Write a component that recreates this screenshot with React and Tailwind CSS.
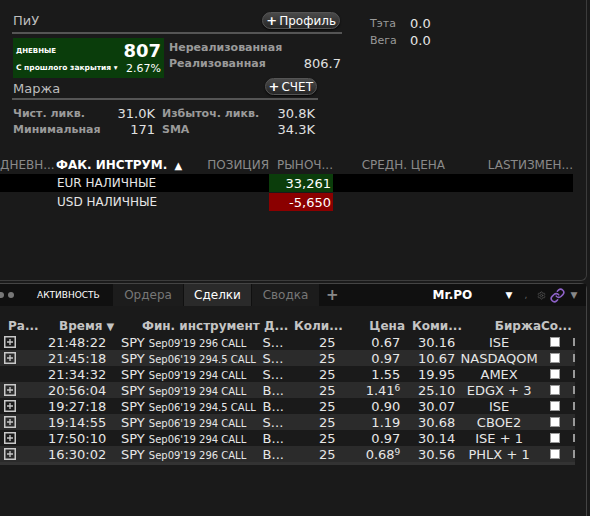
import { Link, Settings } from "lucide-react";

const trades = [
  { plus: true, time: "21:48:22", exp: "Sep09'19 296 CALL", side: "S...", qty: "25", price: "0.67", sup: "", comm: "30.16", exch: "ISE" },
  { plus: true, time: "21:45:18", exp: "Sep06'19 294.5 CALL", side: "S...", qty: "25", price: "0.97", sup: "", comm: "10.67", exch: "NASDAQOM" },
  { plus: false, time: "21:34:32", exp: "Sep09'19 294 CALL", side: "S...", qty: "25", price: "1.55", sup: "", comm: "19.95", exch: "AMEX" },
  { plus: true, time: "20:56:04", exp: "Sep09'19 294 CALL", side: "B...", qty: "25", price: "1.41", sup: "6", comm: "25.10", exch: "EDGX + 3" },
  { plus: true, time: "19:27:18", exp: "Sep06'19 294.5 CALL", side: "B...", qty: "25", price: "0.90", sup: "", comm: "30.07", exch: "ISE" },
  { plus: true, time: "19:14:55", exp: "Sep06'19 294 CALL", side: "S...", qty: "25", price: "1.19", sup: "", comm: "30.68", exch: "CBOE2" },
  { plus: true, time: "17:50:10", exp: "Sep06'19 294 CALL", side: "B...", qty: "25", price: "0.97", sup: "", comm: "30.14", exch: "ISE + 1" },
  { plus: true, time: "16:30:02", exp: "Sep09'19 296 CALL", side: "B...", qty: "25", price: "0.68", sup: "9", comm: "30.56", exch: "PHLX + 1" },
];

const PillButton = ({ children }) => (
  <button className="flex items-center h-[17px] px-[3px] rounded-full bg-gradient-to-b from-[#4a4a4a] to-[#262626] border border-[#555] text-white text-[12px] leading-none shadow-[0_1px_2px_rgba(0,0,0,0.8)]">
    <span className="font-bold mr-[2px] text-[13px]">+</span>
    {children}
  </button>
);

const PlusBox = () => (
  <svg width="12" height="12" viewBox="0 0 12 12">
    <rect x="0.75" y="0.75" width="10.5" height="10.5" fill="none" stroke="#c8c8c8" strokeWidth="1.5" />
    <path d="M6 3v6M3 6h6" stroke="#c8c8c8" strokeWidth="1.3" />
  </svg>
);

export default function App() {
  return (
    <div className="w-[590px] h-[516px] overflow-hidden bg-[#1a1a1a] flex flex-col" style={{ fontFamily: '"DejaVu Sans", sans-serif' }}>
      {/* Top panel */}
      <div className="w-[587px] h-[281px] shrink-0 border-r border-b border-[#3c3c3c] rounded-br-[6px]">
        <div className="flex">
          {/* Left block */}
          <div className="ml-[12px] w-[330px]">
            <div className="flex items-end justify-between h-[34px] border-b-2 border-[#555] pb-[2px]">
              <span className="text-[13px] text-[#bdbdbd] ml-[1px] leading-none mb-[3px]">ПиУ</span>
              <div className="mb-[1px] mr-[2px]"><PillButton>Профиль</PillButton></div>
            </div>
            <div className="flex mt-[4px]">
              <div className="w-[151px] h-[40px] bg-[#0a3d0b] ml-[1px] flex flex-col justify-center px-[3px]">
                <div className="flex items-center justify-between h-[20px]">
                  <span className="text-[7px] font-bold text-white">ДНЕВНЫЕ</span>
                  <span className="text-[18px] font-bold text-white leading-none">807</span>
                </div>
                <div className="flex items-center justify-between h-[14px]">
                  <span className="text-[7.5px] font-bold text-white">С прошлого закрытия ▾</span>
                  <span className="text-[11px] text-white leading-none">2.67%</span>
                </div>
              </div>
              <div className="flex-1 pl-[5px] text-[11px] font-bold text-[#9a9a9a] leading-none">
                <div className="h-[16px] flex items-center mt-[1px]">Нереализованная</div>
                <div className="h-[16px] flex items-center justify-between">
                  <span>Реализованная</span>
                  <span className="font-normal text-[13px] text-[#e0e0e0] mr-[1px]">806.7</span>
                </div>
              </div>
            </div>
            <div className="w-[306px] flex items-end justify-between h-[22px] border-b-2 border-[#555] pb-[2px]">
              <span className="text-[13px] text-[#bdbdbd] ml-[1px] leading-none mb-[1px]">Маржа</span>
              <div className="mb-[1px] mr-[1px]"><PillButton>СЧЕТ</PillButton></div>
            </div>
            <div className="mt-[5px] text-[11px] font-bold text-[#9a9a9a] leading-none">
              <div className="flex items-center h-[16px]">
                <span className="w-[100px] ml-[1px]">Чист. ликв.</span>
                <span className="w-[42px] text-right font-normal text-[13px] text-[#e0e0e0]">31.0K</span>
                <span className="w-[115px] ml-[7px]">Избыточ. ликв.</span>
                <span className="w-[38px] text-right font-normal text-[13px] text-[#e0e0e0]">30.8K</span>
              </div>
              <div className="flex items-center h-[16px]">
                <span className="w-[100px] ml-[1px]">Минимальная</span>
                <span className="w-[42px] text-right font-normal text-[13px] text-[#e0e0e0]">171</span>
                <span className="w-[115px] ml-[7px]">SMA</span>
                <span className="w-[38px] text-right font-normal text-[13px] text-[#e0e0e0]">34.3K</span>
              </div>
            </div>
          </div>
          {/* Greeks */}
          <div className="ml-[28px] mt-[15px] text-[11px] leading-none">
            <div className="flex items-center h-[17px]">
              <span className="w-[40px] text-[#999]">Тэта</span>
              <span className="text-[13px] text-[#e6e6e6]">0.0</span>
            </div>
            <div className="flex items-center h-[17px]">
              <span className="w-[40px] text-[#999]">Вега</span>
              <span className="text-[13px] text-[#e6e6e6]">0.0</span>
            </div>
          </div>
        </div>

        {/* Positions table */}
        <div className="mt-[19px] w-[573px]">
          <div className="flex items-center h-[18px] text-[12px] leading-none text-[#8a8a8a] whitespace-nowrap overflow-hidden">
            <span className="w-[56px] overflow-hidden">ДНЕВН...</span>
            <span className="w-[150px] font-bold text-white">ФАК. ИНСТРУМ. <span className="text-[10px] ml-[3px]">▲</span></span>
            <span className="w-[63px] text-right">ПОЗИЦИЯ</span>
            <span className="w-[64px] text-right">РЫНОЧ...</span>
            <span className="w-[112px] text-right">СРЕДН. ЦЕНА</span>
            <span className="w-[128px] text-right">LASTИЗМЕН...</span>
          </div>
          <div className="flex items-center h-[18px] bg-black text-[12px] text-[#e6e6e6] leading-none">
            <span className="w-[57px]"></span>
            <span className="w-[212px]">EUR НАЛИЧНЫЕ</span>
            <span className="w-[64px] h-full bg-[#0b3d0b] flex items-center justify-end pr-[2px] text-[13px] text-white">33,261</span>
          </div>
          <div className="flex items-center h-[18px] mt-[1px] text-[12px] text-[#e6e6e6] leading-none">
            <span className="w-[57px]"></span>
            <span className="w-[212px]">USD НАЛИЧНЫЕ</span>
            <span className="w-[64px] h-full bg-[#8b0000] flex items-center justify-end pr-[2px] text-[13px] text-white">-5,650</span>
          </div>
        </div>
      </div>

      {/* Bottom panel */}
      <div className="w-[587px] flex-1 mt-[2px] border-r border-t border-[#444] rounded-tr-[6px] flex flex-col">
        {/* Tab bar */}
        <div className="h-[22px] bg-[#101010] flex items-center text-[11px] leading-none whitespace-nowrap">
          <div className="flex items-center gap-[4px] -ml-[2px] w-[39px]">
            <span className="w-[6px] h-[6px] rounded-full bg-[#777]"></span>
            <span className="w-[6px] h-[6px] rounded-full bg-[#777]"></span>
          </div>
          <span className="text-[9px] text-white w-[76px]">АКТИВНОСТЬ</span>
          <div className="h-full w-[70px] bg-[#1c1c1c] flex items-center justify-center text-[#777] text-[12px]">Ордера</div>
          <div className="h-full w-[67px] ml-[1px] bg-[#2a2a2a] flex items-center justify-center text-white text-[12px]">Сделки</div>
          <div className="h-full w-[67px] ml-[1px] bg-[#1c1c1c] flex items-center justify-center text-[#777] text-[12px]">Сводка</div>
          <span className="ml-[7px] text-[#888] text-[15px] font-bold">+</span>
          <span className="ml-[94px] w-[73px] text-white font-bold text-[12px]">Mr.PO</span>
          <span className="text-white text-[9px]">▼</span>
          <span className="ml-[12px] text-[#666] text-[9px]">,</span>
          <Settings size={9} className="ml-[10px] text-[#555]" />
          <Link size={15} strokeWidth={2.5} className="ml-[4px] text-[#8e62c8]" />
          <span className="ml-[5px] text-[#888] text-[9px]">▼</span>
        </div>

        {/* Trades table */}
        <div className="mt-[11px] w-[575px] text-[#e6e6e6]">
          <div className="flex items-center h-[17px] text-[12px] font-bold text-[#c4c4c4] leading-none whitespace-nowrap">
            <span className="w-[50px] pl-[8px]">Ра...</span>
            <span className="w-[89px] pl-[9px]">Время <span className="text-[10px]">▼</span></span>
            <span className="w-[125px] pl-[3px]">Фин. инструмент</span>
            <span className="w-[30px]">Д...</span>
            <span className="w-[50px]">Коли...</span>
            <span className="w-[61px] text-right">Цена</span>
            <span className="w-[58px] ml-[7px]">Коми...</span>
            <span className="w-[71px] text-right">Биржа</span>
            <span className="w-[30px]">Со...</span>
          </div>
          {trades.map((t, i) => (
            <div key={t.time} className={`flex items-center h-[16px] leading-none whitespace-nowrap ${i % 2 === 1 ? "bg-[#2b2b2b]" : ""}`}>
              <span className="w-[48px] pl-[4px] flex items-center">{t.plus && <PlusBox />}</span>
              <span className="w-[58px] text-right text-[13px]">{t.time}</span>
              <span className="w-[157px] pl-[15px] text-[13px]">SPY <span className="text-[10px]">{t.exp}</span></span>
              <span className="w-[50px] text-[13px]">{t.side}</span>
              <span className="w-[23px] text-right text-[13px]">{t.qty}</span>
              <span className="w-[65px] text-right text-[13px]">
                {t.price}
                {t.sup && <span className="text-[9px] relative -top-[4px]">{t.sup}</span>}
              </span>
              <span className="w-[55px] text-right text-[13px]">{t.comm}</span>
              <span className="w-[88px] text-center text-[13px]">{t.exch}</span>
              <span className="ml-[7px] w-[10px] h-[10px] bg-white border border-[#999]"></span>
              <span className="ml-[13px] w-[2px] h-[8px] bg-[#999]"></span>
            </div>
          ))}
          <div className="h-[3px] bg-[#333]"></div>
        </div>
      </div>
    </div>
  );
}
